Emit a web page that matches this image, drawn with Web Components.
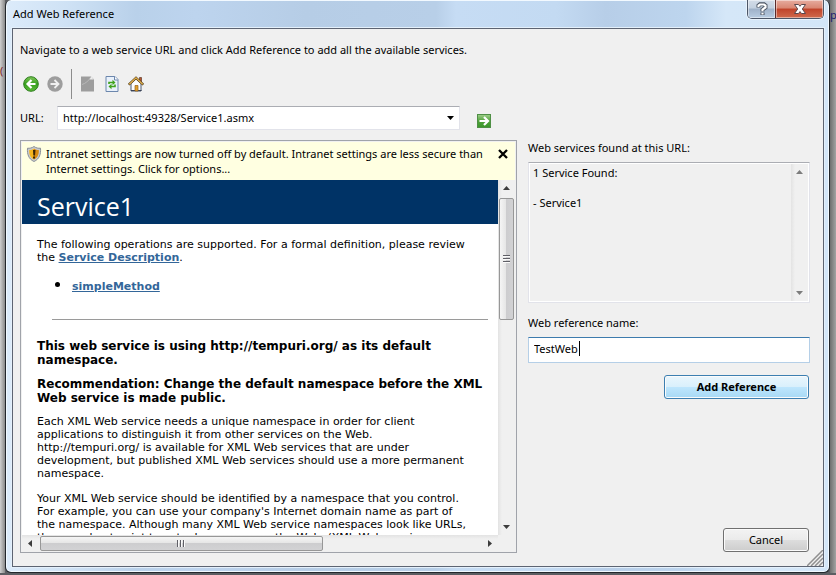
<!DOCTYPE html>
<html lang="en">
<head>
<meta charset="utf-8">
<title>Add Web Reference</title>
<style>
  html, body {
    height: 100%;
    margin: 0;
  }

  body {
    font-family: "Noto Sans", "Open Sans", sans-serif;
    font-size: 11px;
    line-height: 15px;
    color: #000;
    overflow: hidden;
  }
</style>
</head>
<body>

<desk-top>
  <aero-window caption="Add Web Reference">
    <reference-form></reference-form>
  </aero-window>
</desk-top>

<script>
class DeskTop extends HTMLElement {
  constructor() {
    super();
    this.attachShadow({ mode: 'open' }).innerHTML = `
      <style>
        :host {
          display: grid;
          grid-template-columns: 5px minmax(0, 1fr) 6px;
          height: 100vh;
          box-sizing: border-box;
          padding-bottom: 2px;
          background: #5c5e63;
        }
        .left {
          background: linear-gradient(to right, #cfcfcf, #8a8a8a);
          color: #7d1f26;
          padding-top: 63px;
        }
        .right {
          background: linear-gradient(to right, #6f6f6f, #a3a3a3);
          color: #1c1c6e;
          padding-top: 7px;
          overflow: hidden;
        }
      </style>
      <div class="left">(</div>
      <slot></slot>
      <div class="right">p</div>
    `;
  }
}

class AeroWindow extends HTMLElement {
  constructor() {
    super();
    this.attachShadow({ mode: 'open' });
  }

  connectedCallback() {
    this.shadowRoot.innerHTML = `
      <style>
        :host {
          display: flex;
          flex-direction: column;
          min-height: 0;
          box-sizing: border-box;
          border: 1px solid #23272c;
          border-top: 0;
          border-radius: 6px;
          padding: 0 5px 5px 6px;
          box-shadow: inset 0 0 0 1px #f2f9ff;
          background: linear-gradient(to right, #dcebfa 0, #cfe2f5 60px, #b9d1ea 130px, #bdd4ee 190px, #b6cde6 300px, #b8cfe8 430px, #c6dcf4 450px, #c3daf2 550px, #b7cee8 600px, #bdd5ee 680px, #d5e7f8 720px, #d3e6f8 100%);
        }
        header {
          display: flex;
          justify-content: space-between;
          height: 28px;
          flex: none;
        }
        h1 {
          margin: 0;
          padding: 6px 0 0 1px;
          font-size: 11px;
          line-height: 15px;
          font-weight: normal;
        }
        .controls {
          display: flex;
          height: 19px;
          box-sizing: border-box;
          border: 1px solid #4c5667;
          border-top: 0;
          border-radius: 0 0 5px 5px;
          overflow: hidden;
          box-shadow: 0 0 0 1px #e9f3fc;
        }
        button {
          display: grid;
          place-items: center;
          border: 0;
          padding: 0;
          box-shadow: inset 0 0 0 1px rgba(255, 255, 255, .45);
        }
        .help {
          width: 27px;
          background: linear-gradient(#d3dce8 0, #c3d0df 45%, #9fb1c8 50%, #b9cde2 100%);
        }
        .close {
          width: 48px;
          border-left: 1px solid #5b2b2b;
          background: linear-gradient(#e6ac9f 0, #d98672 45%, #c0432a 50%, #cf6a4c 100%);
        }
        .client {
          flex: 1;
          min-height: 0;
          display: flex;
          flex-direction: column;
          border: 1px solid #5d6472;
          background: #f0f0f0;
          box-shadow: 0 0 0 1px #e4f0fb;
        }
      </style>
      <header>
        <h1>${this.getAttribute('caption')}</h1>
        <div class="controls">
          <button class="help" type="button" aria-label="Help">
            <svg width="12" height="14" viewBox="0 0 12 14" fill="none">
              <path d="M2.500 5.500V3.500L4 2.200h4L9.500 3.500V5.500L6.500 7.500V9.500M6.500 10.500v2.500" stroke="#4a5361" stroke-width="4"/>
              <path d="M2.500 5V3.500L4 2.500h4L9.500 3.500V5.500L6.500 7.500V9.200M6.500 10.700v1.800" stroke="#fff" stroke-width="2.200"/>
            </svg>
          </button>
          <button class="close" type="button" aria-label="Close">
            <svg width="14" height="12" viewBox="0 0 14 12">
              <path d="M1.500 1.500h4L7 3.300 8.500 1.500h4L9.300 6l3.200 4.500h-4L7 8.600 5.500 10.500h-4L4.700 6z" fill="#fff" stroke="#59474c"/>
            </svg>
          </button>
        </div>
      </header>
      <div class="client"><slot></slot></div>
    `;
  }
}

class ScrollBar extends HTMLElement {
  constructor() {
    super();
    this.attachShadow({ mode: 'open' });
  }

  connectedCallback() {
    const thumb = this.hasAttribute('thumb') ? '<div class="thumb"><i></i></div>' : '';
    this.shadowRoot.innerHTML = `
      <style>
        :host {
          display: flex;
          flex-direction: column;
          width: 17px;
          box-sizing: border-box;
          background: linear-gradient(to right, #e3e3e3, #f0f0f0 4px, #f0f0f0);
        }
        :host([horizontal]) {
          flex-direction: row;
          width: auto;
          height: 17px;
          background: linear-gradient(#e3e3e3, #f0f0f0 4px, #f0f0f0);
        }
        svg {
          flex: none;
          width: 17px;
          height: 17px;
          fill: var(--arrow, #3c3c3c);
        }
        .track {
          flex: 1;
          min-height: 0;
          min-width: 0;
        }
        .thumb {
          display: grid;
          place-items: center;
          box-sizing: border-box;
          width: 15px;
          height: 38%;
          margin: 1px;
          border: 1px solid #979797;
          border-radius: 2px;
          background: linear-gradient(to right, #f5f5f5 0, #e6e6e6 45%, #cdcdcf 50%, #d2d2d4 100%);
        }
        :host([horizontal]) .thumb {
          width: 64%;
          height: 15px;
          background: linear-gradient(#f5f5f5 0, #e6e6e6 45%, #cdcdcf 50%, #d2d2d4 100%);
        }
        i {
          width: 7px;
          height: 8px;
          background: repeating-linear-gradient(#5f5f66 0 1px, #fafafa 1px 2px, transparent 2px 3px);
        }
        :host([horizontal]) i {
          width: 8px;
          height: 7px;
          background: repeating-linear-gradient(to right, #5f5f66 0 1px, #fafafa 1px 2px, transparent 2px 3px);
        }
      </style>
      ${this.hasAttribute('horizontal')
        ? '<svg viewBox="0 0 17 17"><path d="M10 5v7L6 8.500z"/></svg>'
        : '<svg viewBox="0 0 17 17"><path d="M5 10h7L8.500 6z"/></svg>'}
      <div class="track">${thumb}</div>
      ${this.hasAttribute('horizontal')
        ? '<svg viewBox="0 0 17 17"><path d="M7 5v7l4-3.500z"/></svg>'
        : '<svg viewBox="0 0 17 17"><path d="M5 7h7l-3.500 4z"/></svg>'}
    `;
  }
}

class InfoBar extends HTMLElement {
  constructor() {
    super();
    this.attachShadow({ mode: 'open' }).innerHTML = `
      <style>
        :host {
          display: flex;
          align-items: flex-start;
          gap: 4px;
          padding: 4px 7px 4px 4px;
          background: #ffffe1;
        }
        p {
          flex: 1;
          margin: 0;
        }
        svg {
          flex: none;
          display: block;
        }
        button {
          border: 0;
          padding: 3px 0;
          background: none;
        }
      </style>
      <svg width="16" height="16" viewBox="0 0 16 16">
        <path d="M8 .500C6 2 3.500 2.500 1.500 2.200 1 8 2.500 13 8 15.500 13.500 13 15 8 14.500 2.200 12.500 2.500 10 2 8 .500z" fill="#c9ccd0" stroke="#8a9098"/>
        <path d="M8 2.500C6.500 3.500 5 4 3.200 4 3 8 4 11.500 8 13.500z" fill="#f5b51e"/>
        <path d="M8 2.500c1.500 1 3 1.500 4.800 1.500C13 8 12 11.500 8 13.500z" fill="#d98a10"/>
        <path d="M7 4h2.500L9 9.500H7.300zM7 10.500h2v2H7z" fill="#3a2506"/>
      </svg>
      <p><slot></slot></p>
      <button type="button" aria-label="Dismiss">
        <svg width="10" height="10" viewBox="0 0 10 10"><path d="M1 1l8 8M9 1L1 9" stroke="#000" stroke-width="2.300"/></svg>
      </button>
    `;
  }
}

class ServicePage extends HTMLElement {
  constructor() {
    super();
    this.attachShadow({ mode: 'open' }).innerHTML = `
      <style>
        :host {
          display: block;
          overflow: hidden;
          background: #fff;
          font: 11px/13px "DejaVu Sans", sans-serif;
        }
        h2 {
          margin: 0;
          padding: 11px 15px 2px;
          background: #003366;
          color: #fff;
          font: 25px/31px "Open Sans", sans-serif;
        }
        main {
          padding: 14px 10px 0 15px;
        }
        p {
          margin: 0 0 12px;
        }
        a {
          color: #336699;
          font-weight: bold;
        }
        ul {
          margin: 14px 0 26px;
          padding-left: 35px;
        }
        li::marker {
          font-size: 16px;
        }
        hr {
          margin: 0 0 19px 15px;
          border: 0;
          border-top: 1px solid #9a9a9a;
        }
        h3 {
          margin: 0 0 10px;
          font-size: 12px;
          line-height: 14px;
        }
      </style>
      <h2>Service1</h2>
      <main>
        <p>The following operations are supported. For a formal definition, please review<br>the <a href="#">Service Description</a>.</p>
        <ul><li><a href="#">simpleMethod</a></li></ul>
        <hr>
        <h3>This web service is using http://tempuri.org/ as its default<br>namespace.</h3>
        <h3>Recommendation: Change the default namespace before the XML<br>Web service is made public.</h3>
        <p>Each XML Web service needs a unique namespace in order for client<br>applications to distinguish it from other services on the Web.<br>http://tempuri.org/ is available for XML Web services that are under<br>development, but published XML Web services should use a more permanent<br>namespace.</p>
        <p>Your XML Web service should be identified by a namespace that you control.<br>For example, you can use your company's Internet domain name as part of<br>the namespace. Although many XML Web service namespaces look like URLs,<br>they need not point to actual resources on the Web. (XML Web service</p>
      </main>
    `;
  }
}

class PushButton extends HTMLElement {
  constructor() {
    super();
    this.attachShadow({ mode: 'open' }).innerHTML = `
      <style>
        :host {
          display: block;
          width: 86px;
        }
        :host([primary]) {
          width: 145px;
        }
        button {
          display: block;
          width: 100%;
          height: 24px;
          padding: 0 0 2px;
          border: 1px solid #707070;
          border-radius: 3px;
          background: linear-gradient(#f3f3f3 0, #ebebeb 48%, #dddddd 50%, #cdcdcd 100%);
          box-shadow: inset 0 0 0 1px #fbfbfb;
          font: inherit;
          color: #000;
        }
        :host([primary]) button {
          border-color: #3c7fb1;
          background: linear-gradient(#eaf6fd 0, #d9f0fc 48%, #bee6fd 50%, #a7d9f5 100%);
          font-weight: bold;
        }
      </style>
      <button type="button"><slot></slot></button>
    `;
  }
}

class ToolBar extends HTMLElement {
  constructor() {
    super();
    this.attachShadow({ mode: 'open' }).innerHTML = `
      <style>
        :host {
          display: flex;
          align-items: center;
          gap: 8px;
          height: 30px;
          padding-left: 3px;
        }
        button {
          border: 0;
          padding: 0;
          background: none;
        }
        svg {
          display: block;
        }
        hr {
          width: 1px;
          height: 30px;
          margin: 0;
          border: 0;
          background: #8c8c8c;
        }
      </style>
      <button type="button" aria-label="Back">
        <svg width="16" height="16" viewBox="0 0 16 16">
          <defs><linearGradient id="g" x2="0" y2="1"><stop stop-color="#7fc65a"/><stop offset=".5" stop-color="#36a01c"/><stop offset="1" stop-color="#5dbb3a"/></linearGradient></defs>
          <circle cx="8" cy="8" r="7.300" fill="url(#g)" stroke="#2c7d1c"/>
          <path d="M12.500 8H4.500M8.500 4L4.500 8l4 4" fill="none" stroke="#fff" stroke-width="2.200"/>
        </svg>
      </button>
      <button type="button" aria-label="Forward">
        <svg width="16" height="16" viewBox="0 0 16 16">
          <circle cx="8" cy="8" r="7.700" fill="#9d9d9d"/>
          <path d="M3.500 8h8M7.500 4l4 4-4 4" fill="none" stroke="#f0f0f0" stroke-width="1.800"/>
        </svg>
      </button>
      <hr>
      <button type="button" aria-label="Stop">
        <svg width="16" height="16" viewBox="0 0 16 16">
          <path d="M2 .500h9l3 3V15.500H1V.500z" fill="#9d9d9d"/>
          <path d="M2 8.500C5.500 7.500 8.500 5 10.500 1.500" fill="none" stroke="#b9b9b9"/>
          <path d="M11 0v1l-1.500 2.500H13.500z" fill="#ececec"/>
        </svg>
      </button>
      <button type="button" aria-label="Refresh">
        <svg width="16" height="16" viewBox="0 0 16 16">
          <path d="M2 .500h9l3 3v12H2z" fill="#e9f1fb" stroke="#6c87ad"/>
          <path d="M10.500.500v3.500h3.500" fill="#fff" stroke="#6c87ad"/>
          <path d="M5 8V6.500h4.500M11 8.500V10.500H6.500" fill="none" stroke="#3fa31c" stroke-width="1.600"/>
          <path d="M8.500 3.700v5.500l3-2.700zM7.500 7.800v5.500l-3-2.800z" fill="#3fa31c"/>
        </svg>
      </button>
      <button type="button" aria-label="Home">
        <svg width="16" height="16" viewBox="0 0 16 16">
          <path d="M11.500 1.500h2V6h-2z" fill="#b7542c" stroke="#5b3a2a" stroke-width=".7"/>
          <path d="M3 7.500L8 3l5 4.500V15H3z" fill="#fdfdfd" stroke="#4b5870"/>
          <path d="M3 14.500h10.500" stroke="#3b4254"/>
          <path d="M7 9.500h3V15H7z" fill="#e3a02c" stroke="#94611a" stroke-width=".7"/>
          <path d="M.7 8.700L8 1.800l7.300 6.900" fill="none" stroke="#5a421c" stroke-width="2.400"/>
          <path d="M1.300 8.200L8 1.900l6.700 6.300" fill="none" stroke="#e5b34f" stroke-width="1.200"/>
        </svg>
      </button>
    `;
  }
}

class ReferenceForm extends HTMLElement {
  constructor() {
    super();
    this.attachShadow({ mode: 'open' }).innerHTML = `
      <style>
        :host {
          flex: 1;
          min-height: 0;
          display: flex;
          flex-direction: column;
          padding: 13px 0 0 7px;
        }
        .intro {
          margin: 0 0 12px;
        }
        select, input, textarea {
          box-sizing: border-box;
          width: 100%;
          margin: 0;
          border: 0;
          padding: 0;
          background: none;
          font: inherit;
          color: #000;
          appearance: none;
          outline: 0;
          border-radius: 0;
        }
        .columns {
          flex: 1;
          min-height: 0;
          display: grid;
          grid-template-columns: minmax(0, 497fr) minmax(0, 282fr);
          grid-template-rows: auto minmax(0, 1fr);
          column-gap: 11px;
          padding: 7px 13px 13px 0;
        }
        .address {
          display: grid;
          grid-template-columns: 37px minmax(0, 1fr) 16px;
          align-items: center;
          margin: 0 25px 10px 0;
        }
        .address label {
          padding-bottom: 2px;
        }
        .combo {
          display: grid;
          grid-template-columns: minmax(0, 1fr) 17px;
          align-items: center;
          height: 24px;
          box-sizing: border-box;
          margin-right: 16px;
          border: 1px solid #e2e3ea;
          border-top-color: #abadb3;
          background: #fff;
        }
        .combo select {
          grid-area: 1 / 1 / 2 / 3;
          height: 22px;
          padding: 0 0 2px 5px;
        }
        .combo svg {
          grid-area: 1 / 2;
          pointer-events: none;
        }
        .go {
          border: 0;
          padding: 6px 0 0;
          background: none;
        }
        .go svg {
          display: block;
        }
        .browser {
          grid-row: 2;
          display: grid;
          grid-template-columns: minmax(0, 1fr) 17px;
          grid-template-rows: auto minmax(0, 1fr) 17px;
          border: 1px solid #a0a3aa;
          padding: 1px 1px 0;
          background: #f0f0f0;
        }
        info-bar {
          grid-column: 1 / 3;
        }
        .side {
          grid-row: 2;
          grid-column: 2;
          display: flex;
          flex-direction: column;
          align-items: stretch;
        }
        .side label {
          margin-bottom: 7px;
        }
        .found {
          display: flex;
          height: 141px;
          box-sizing: border-box;
          margin-bottom: 12px;
          border: 1px solid #e2e3ea;
          border-top-color: #abadb3;
          box-shadow: inset 0 0 0 1px #fff;
          padding: 1px;
          --arrow: #7c7c7c;
        }
        .found textarea {
          flex: 1;
          resize: none;
          overflow: hidden;
          padding: 1px 3px;
        }
        /* the text caret is painted as part of the field */
        .name {
          height: 26px;
          padding: 0 5px 4px;
          border: 1px solid #b5cfe7;
          border-top-color: #3d7bad;
          background: linear-gradient(#000, #000) 50px 3px / 1px 15px no-repeat #fff;
        }
        push-button {
          align-self: flex-end;
          margin: 12px 1px 1px 0;
        }
        push-button:last-child {
          margin-top: auto;
        }
        .grip {
          position: absolute;
          right: 13px;
          bottom: 9px;
        }
      </style>

      <p class="intro">Navigate to a web service URL and click Add Reference to add all the available services.</p>
      <tool-bar></tool-bar>
      <div class="columns">
        <div class="address">
          <label for="url">URL:</label>
          <div class="combo">
            <select id="url"><option>http://localhost:49328/Service1.asmx</option></select>
            <svg width="17" height="8" viewBox="0 0 17 8"><path d="M5 2h7L8.500 6z"/></svg>
          </div>
          <button class="go" type="button" aria-label="Go">
            <svg width="16" height="16" viewBox="0 0 16 16">
              <defs><linearGradient id="go" x2="0" y2="1"><stop stop-color="#a0cf8c"/><stop offset=".5" stop-color="#4fa23a"/><stop offset="1" stop-color="#3b962a"/></linearGradient></defs>
              <rect x="1.500" y="1.500" width="13" height="13" fill="url(#go)" stroke="#4f8f45"/>
              <path d="M3.500 8h8M8 4l4 4-4 4" fill="none" stroke="#fff" stroke-width="2.200"/>
            </svg>
          </button>
        </div>

        <div class="browser">
          <info-bar>Intranet settings are now turned off by default. Intranet settings are less secure than<br>Internet settings. Click for options...</info-bar>
          <service-page></service-page>
          <scroll-bar thumb></scroll-bar>
          <scroll-bar thumb horizontal></scroll-bar>
        </div>

        <div class="side">
          <label for="found">Web services found at this URL:</label>
          <div class="found">
            <textarea id="found" readonly>1 Service Found:

- Service1</textarea>
            <scroll-bar></scroll-bar>
          </div>
          <label for="name">Web reference name:</label>
          <input class="name" id="name" type="text" value="TestWeb">
          <push-button primary>Add Reference</push-button>
          <push-button>Cancel</push-button>
        </div>
      </div>
      <svg class="grip" width="16" height="16" viewBox="0 0 16 16">
        <path d="M0 16L16 0M4 16L16 4M8 16l8-8M12 16l4-4" stroke="#8f8f8f" stroke-width="1.500"/>
      </svg>
    `;
  }
}

customElements.define('desk-top', DeskTop);
customElements.define('aero-window', AeroWindow);
customElements.define('scroll-bar', ScrollBar);
customElements.define('info-bar', InfoBar);
customElements.define('service-page', ServicePage);
customElements.define('push-button', PushButton);
customElements.define('tool-bar', ToolBar);
customElements.define('reference-form', ReferenceForm);
</script>
</body>
</html>
